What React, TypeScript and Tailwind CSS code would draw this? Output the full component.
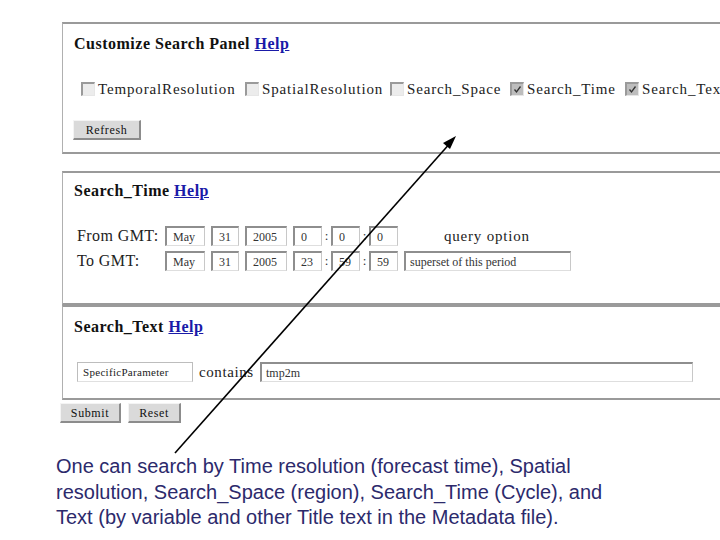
import React from "react";

const serif = { fontFamily: '"Liberation Serif", "Times New Roman", serif' };

function Check({ checked }: { checked?: boolean }) {
  return (
    <span
      className={`inline-flex items-center justify-center w-[14px] h-[14px] border-t-2 border-l-2 border-t-[#9a9a9a] border-l-[#9a9a9a] border-b border-r border-b-[#e6e6e6] border-r-[#e6e6e6] ${
        checked ? "bg-[#bdbdbd]" : "bg-[#ececec]"
      }`}
    >
      {checked && (
        <svg width="9" height="9" viewBox="0 0 9 9">
          <path d="M1.5 4.5 L3.5 7 L7.5 1.5" stroke="#333" strokeWidth="1.3" fill="none" />
        </svg>
      )}
    </span>
  );
}

function CheckItem({ label, checked, w }: { label: string; checked?: boolean; w: string }) {
  return (
    <div className={`flex items-center gap-[3px] shrink-0 ${w}`}>
      <Check checked={checked} />
      <span className="text-[15px] leading-[18px] text-[#222] tracking-[0.85px] whitespace-nowrap">{label}</span>
    </div>
  );
}

function Box({ v, w, wide }: { v: string; w: string; wide?: boolean }) {
  return (
    <div
      className={`h-[20px] ${w} shrink-0 border-t-2 border-l-2 border-t-[#8e8e8e] border-l-[#8e8e8e] border-b border-r border-b-[#dedede] border-r-[#c8c8c8] bg-white flex items-center ${
        wide ? "pl-[4px]" : "pl-[6px]"
      } text-[12px] leading-[16px] text-[#333] whitespace-nowrap`}
    >
      {v}
    </div>
  );
}

function Btn({ label, w }: { label: string; w: string }) {
  return (
    <div
      className={`h-[20px] ${w} shrink-0 bg-[#dadada] border-t border-l border-t-[#f4f4f4] border-l-[#f4f4f4] border-b-2 border-r-2 border-b-[#8c8c8c] border-r-[#8c8c8c] flex items-center justify-center text-[12px] leading-[16px] text-[#111] tracking-[0.6px]`}
    >
      {label}
    </div>
  );
}

function Title({ t }: { t: string }) {
  return (
    <div className="h-[18px] leading-[18px] text-[16px] font-bold text-[#111] tracking-[0.5px] whitespace-nowrap">
      {t}{" "}
      <span className="text-[#1a1aa8] underline">Help</span>
    </div>
  );
}

function Colon() {
  return <span className="w-[9px] text-center text-[13px] leading-[16px] text-[#333] shrink-0">:</span>;
}

export default function App() {
  return (
    <div className="relative w-[720px] h-[540px] bg-white overflow-hidden" style={serif}>
      <div className="pt-[22px]">
        {/* Panel 1 */}
        <div className="ml-[62px] w-[700px] h-[132px] border-2 border-l border-[#9a9a9a] border-l-[#b0b0b0] pl-[12px]">
          <div className="mt-[11px] ml-[-1px]">
            <Title t="Customize Search Panel" />
          </div>
          <div className="mt-[27px] ml-[6px] flex">
            <CheckItem label="TemporalResolution" w="w-[164px]" />
            <CheckItem label="SpatialResolution" w="w-[145px]" />
            <CheckItem label="Search_Space" w="w-[120px]" />
            <CheckItem label="Search_Time" w="w-[115px]" checked />
            <CheckItem label="Search_Text" w="w-[120px]" checked />
          </div>
          <div className="mt-[22px] ml-[-2px]">
            <Btn label="Refresh" w="w-[68px]" />
          </div>
        </div>

        {/* Panel 2 */}
        <div className="mt-[17px] ml-[62px] w-[700px] h-[134px] border-2 border-l border-[#9a9a9a] border-l-[#b0b0b0] pl-[11px]">
          <div className="mt-[9px]">
            <Title t="Search_Time" />
          </div>
          <div className="mt-[26px] flex flex-col gap-[5px] text-[16px] leading-[20px] text-[#222]">
            <div className="flex items-center h-[20px]">
              <span className="w-[91px] pl-[3px] shrink-0 tracking-[0.4px] whitespace-nowrap">From GMT:</span>
              <Box v="May" w="w-[40px]" />
              <div className="w-[6px]" />
              <Box v="31" w="w-[28px]" />
              <div className="w-[6px]" />
              <Box v="2005" w="w-[42px]" />
              <div className="w-[6px]" />
              <Box v="0" w="w-[29px]" />
              <Colon />
              <Box v="0" w="w-[29px]" />
              <Colon />
              <Box v="0" w="w-[29px]" />
              <span className="ml-[46px] text-[15px] tracking-[0.8px] whitespace-nowrap">query option</span>
            </div>
            <div className="flex items-center h-[20px]">
              <span className="w-[91px] pl-[3px] shrink-0 tracking-[0.4px] whitespace-nowrap">To GMT:</span>
              <Box v="May" w="w-[40px]" />
              <div className="w-[6px]" />
              <Box v="31" w="w-[28px]" />
              <div className="w-[6px]" />
              <Box v="2005" w="w-[42px]" />
              <div className="w-[6px]" />
              <Box v="23" w="w-[29px]" />
              <Colon />
              <Box v="59" w="w-[29px]" />
              <Colon />
              <Box v="59" w="w-[29px]" />
              <div className="w-[6px]" />
              <Box v="superset of this period" w="w-[167px]" wide />
            </div>
          </div>
        </div>

        {/* Panel 3 */}
        <div className="ml-[62px] w-[700px] h-[95px] border-2 border-l border-[#9a9a9a] border-l-[#b0b0b0] pl-[11px]">
          <div className="mt-[11px]">
            <Title t="Search_Text" />
          </div>
          <div className="mt-[26px] flex items-center h-[20px] text-[16px] leading-[20px] text-[#222]">
            <div className="w-[3px]" />
            <div className="h-[20px] w-[116px] border border-[#bdbdbd] border-b-[#e0e0e0] flex items-center pl-[5px] text-[11px] leading-[16px] text-[#222] tracking-[0.3px] whitespace-nowrap">
              SpecificParameter
            </div>
            <span className="ml-[6px] w-[61px] text-[15px] tracking-[0.6px] whitespace-nowrap">contains</span>
            <Box v="tmp2m" w="w-[433px]" wide />
          </div>
        </div>

        {/* Buttons */}
        <div className="mt-[3px] ml-[60px] flex gap-[7px]">
          <Btn label="Submit" w="w-[61px]" />
          <Btn label="Reset" w="w-[53px]" />
        </div>

        {/* Caption */}
        <div
          className="mt-[31px] pl-[56px] text-[20px] leading-[25.5px] text-[#2c2a6c] whitespace-nowrap"
          style={{ fontFamily: '"Liberation Sans", Arial, sans-serif' }}
        >
          One can search by Time resolution (forecast time), Spatial
          <br />
          resolution, Search_Space (region), Search_Time (Cycle), and
          <br />
          Text (by variable and other Title text in the Metadata file).
        </div>
      </div>

      {/* Arrow overlay */}
      <svg className="absolute inset-0 pointer-events-none" width="720" height="540" viewBox="0 0 720 540">
        <line x1="175" y1="453" x2="452" y2="141" stroke="#000" strokeWidth="1.6" />
        <polygon points="456,136 443,143 450,149" fill="#000" />
      </svg>
    </div>
  );
}
